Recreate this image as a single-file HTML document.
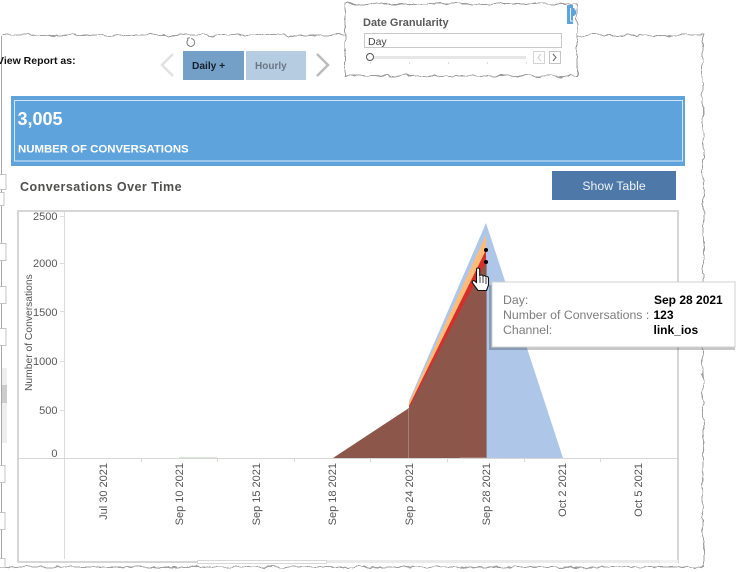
<!DOCTYPE html>
<html><head><meta charset="utf-8">
<style>
html,body{margin:0;padding:0;background:#fff;width:736px;height:572px;overflow:hidden}
svg{display:block;position:absolute;left:0;top:0}
text{font-family:"Liberation Sans",sans-serif}
</style></head>
<body>
<svg width="736" height="572" viewBox="0 0 736 572" xmlns="http://www.w3.org/2000/svg">
<defs>
<filter id="torn" x="-5%" y="-5%" width="110%" height="110%" filterUnits="objectBoundingBox">
<feTurbulence type="fractalNoise" baseFrequency="0.09" numOctaves="3" seed="4" result="n"/>
<feDisplacementMap in="SourceGraphic" in2="n" scale="6" xChannelSelector="R" yChannelSelector="G"/>
</filter>
</defs>
<rect width="736" height="572" fill="#fff"/>

<!-- left edge and torn outline -->
<path d="M1.5 36V568" stroke="#a8a8a8" fill="none"/>
<path d="M1 35H345M577 35H703V567H1" stroke="#a0a0a0" fill="none" filter="url(#torn)"/>

<!-- left stubs -->
<g fill="#fff" stroke="#c4c4c4">
<rect x="-1" y="174.5" width="7" height="15"/>
<rect x="-1" y="192.5" width="5" height="13"/>
<rect x="-1" y="243.5" width="7" height="17"/>
<rect x="-1" y="286.5" width="7" height="17"/>
<rect x="-1" y="328.5" width="7" height="17"/>
<rect x="-1" y="465.5" width="6" height="17"/>
<rect x="-1" y="512.5" width="6" height="17"/>
<rect x="-1" y="558.5" width="6" height="9"/>
</g>
<rect x="2" y="368" width="5" height="75" fill="#eeeeee"/>
<rect x="2" y="385" width="5" height="18" fill="#cccccc"/>

<!-- view report -->
<text x="-3" y="64" font-size="10.500" font-weight="bold" fill="#111">View Report as:</text>
<path d="M187.800 40a3.900 3.900 0 1 0 3.200-1.400" fill="none" stroke="#777" stroke-width=".9"/>
<path d="M190 37.800l-2.400.4l.3 2.400" fill="none" stroke="#777" stroke-width=".9"/>
<path d="M173 54L162 65L173 76" fill="none" stroke="#e2e2e2" stroke-width="2.5"/>
<path d="M317 54L328 65L317 76" fill="none" stroke="#bcbcbc" stroke-width="2.5"/>
<rect x="183" y="51" width="61" height="29" fill="#749fc6"/>
<rect x="246" y="51" width="60" height="29" fill="#b5cce1"/>
<text x="192" y="69" font-size="10.200" font-weight="bold" fill="#16202a">Daily +</text>
<text x="255" y="69" font-size="10" font-weight="bold" fill="#6a7684">Hourly</text>

<!-- banner -->
<rect x="11" y="96" width="674" height="70" fill="#5ea3db"/>
<rect x="14.500" y="100.500" width="668" height="60.500" fill="none" stroke="#d5e6f5"/>
<text x="17.500" y="125" font-size="18" font-weight="bold" fill="#fff">3,005</text>
<text x="18" y="152.500" font-size="11.400" font-weight="bold" fill="#fff">NUMBER OF CONVERSATIONS</text>

<!-- title & button -->
<text x="20" y="191" font-size="12.500" font-weight="bold" fill="#50504f" letter-spacing=".47">Conversations Over Time</text>
<rect x="552" y="171" width="124" height="29" fill="#4e78a8"/>
<text x="614" y="190" font-size="12.300" text-anchor="middle" fill="#eef3f8">Show Table</text>

<!-- chart frame -->
<rect x="18" y="211" width="660" height="351" fill="#fff" stroke="#d6d6d6" stroke-width="2"/>
<path d="M64.500 212V559" stroke="#dcdcdc"/>
<path d="M19 458.500H677" stroke="#d6d6d6"/>
<path d="M141.500 459v3M217.500 459v3M294.500 459v3M370.500 459v3M447.500 459v3M524.500 459v3M600.500 459v3" stroke="#d8d8d8"/>
<path d="M60 216.500h4M60 263.500h4M60 311.500h4M60 361.500h4M60 410.500h4" stroke="#dcdcdc"/>
<g font-size="11" fill="#585858" text-anchor="end">
<text x="57.500" y="220">2500</text>
<text x="57.500" y="267">2000</text>
<text x="57.500" y="316">1500</text>
<text x="57.500" y="365">1000</text>
<text x="57.500" y="414">500</text>
<text x="57.500" y="457">0</text>
</g>
<text transform="translate(32 391) rotate(-90)" font-size="10.300" fill="#555">Number of Conversations</text>

<!-- areas -->
<path d="M409 458V401L486 223L563 458Z" fill="#aec7e8"/>
<path d="M409 458V403L486 235V458Z" fill="#ffbb78"/>
<path d="M409 458V406L486 250V458Z" fill="#d62f2a"/>
<path d="M333 458L409 408L486 262V458Z" fill="#8c564b"/>
<path d="M408.500 409V458" stroke="#a87f76"/>
<path d="M486.500 262V458" stroke="#8f8a90"/>
<path d="M460 457.500H486" stroke="#a5776a"/>
<path d="M179 457.500H217" stroke="#dbe9dc"/>
<circle cx="486" cy="250" r="2" fill="#000"/>
<circle cx="486" cy="262" r="2" fill="#000"/>

<!-- x labels -->
<g font-size="11" fill="#555" text-anchor="end">
<text transform="translate(107 463) rotate(-90)">Jul 30 2021</text>
<text transform="translate(183 463) rotate(-90)">Sep 10 2021</text>
<text transform="translate(260 463) rotate(-90)">Sep 15 2021</text>
<text transform="translate(336 463) rotate(-90)">Sep 18 2021</text>
<text transform="translate(413 463) rotate(-90)">Sep 24 2021</text>
<text transform="translate(490 463) rotate(-90)">Sep 28 2021</text>
<text transform="translate(566 463) rotate(-90)">Oct 2 2021</text>
<text transform="translate(642 463) rotate(-90)">Oct 5 2021</text>
</g>

<!-- scrollbar -->
<rect x="197.500" y="560.500" width="129" height="3" fill="#fff" stroke="#d8d8d8"/>
<rect x="327" y="560" width="351" height="3" fill="#eaeaea"/>
<rect x="660" y="560" width="18" height="3" fill="#f2f2f2"/>

<!-- tooltip -->
<rect x="489" y="285" width="246" height="65" fill="#000" opacity=".22"/>
<rect x="492" y="282" width="243" height="65" fill="#fff" stroke="#d0d0d0"/>
<g font-size="12.300" fill="#7d7d7d">
<text x="503" y="304">Day:</text>
<text x="503" y="319">Number of Conversations :</text>
<text x="503" y="334">Channel:</text>
</g>
<g font-size="12" font-weight="bold" fill="#000">
<text x="654" y="304">Sep 28 2021</text>
<text x="653.500" y="319">123</text>
<text x="653.500" y="334">link_ios</text>
</g>

<!-- hand cursor -->
<path d="M476.500 269.500c0-2 3-2 3.200 0V276c.8-1.400 3-1.400 3.300.4c.8-1.200 2.800-1 3 .6c1-.8 2.500-.2 2.500 1.300V285l-2 5.500h-8.500l-5.500-7.500c-1-1.700 1-3.200 2.500-1.800l1.500 1.500Z" fill="#fff" stroke="#111" stroke-width="1.100" stroke-linejoin="round"/>
<path d="M480 277v6M483 277v6M486 278v6" stroke="#111" stroke-width=".8" fill="none"/>

<!-- popup -->
<rect x="345" y="4" width="232" height="72" fill="#fff" stroke="#9c9c9c" filter="url(#torn)"/>
<rect x="567" y="5" width="6" height="19" fill="#5ea3db"/>
<path d="M572 8h2l2 3v3l-2 2h-2Z" fill="#5ea3db"/>
<path d="M570.500 8v13h3" stroke="#e8f1fa" fill="none"/>
<text x="363" y="26" font-size="11" font-weight="bold" fill="#5a5a5a">Date Granularity</text>
<rect x="364.500" y="33.500" width="197" height="14" fill="#fff" stroke="#c8c8c8"/>
<text x="368" y="45" font-size="10.500" fill="#444">Day</text>
<rect x="370" y="56" width="156" height="3" fill="#e6e6e6"/>
<path d="M370.500 62v2M409.500 62v2M448.500 62v2M487.500 62v2M526.500 62v2" stroke="#ddd"/>
<circle cx="370" cy="57" r="3.500" fill="#fff" stroke="#555"/>
<rect x="533.500" y="51.500" width="11" height="12" fill="#fff" stroke="#d4d4d4"/>
<rect x="549.500" y="51.500" width="11" height="12" fill="#fff" stroke="#c4c4c4"/>
<path d="M541 54l-3 3.500l3 3.500" fill="none" stroke="#d4d4d4" stroke-width="1.200"/>
<path d="M553 54l3 3.500l-3 3.500" fill="none" stroke="#777" stroke-width="1.200"/>
</svg>
</body></html>
